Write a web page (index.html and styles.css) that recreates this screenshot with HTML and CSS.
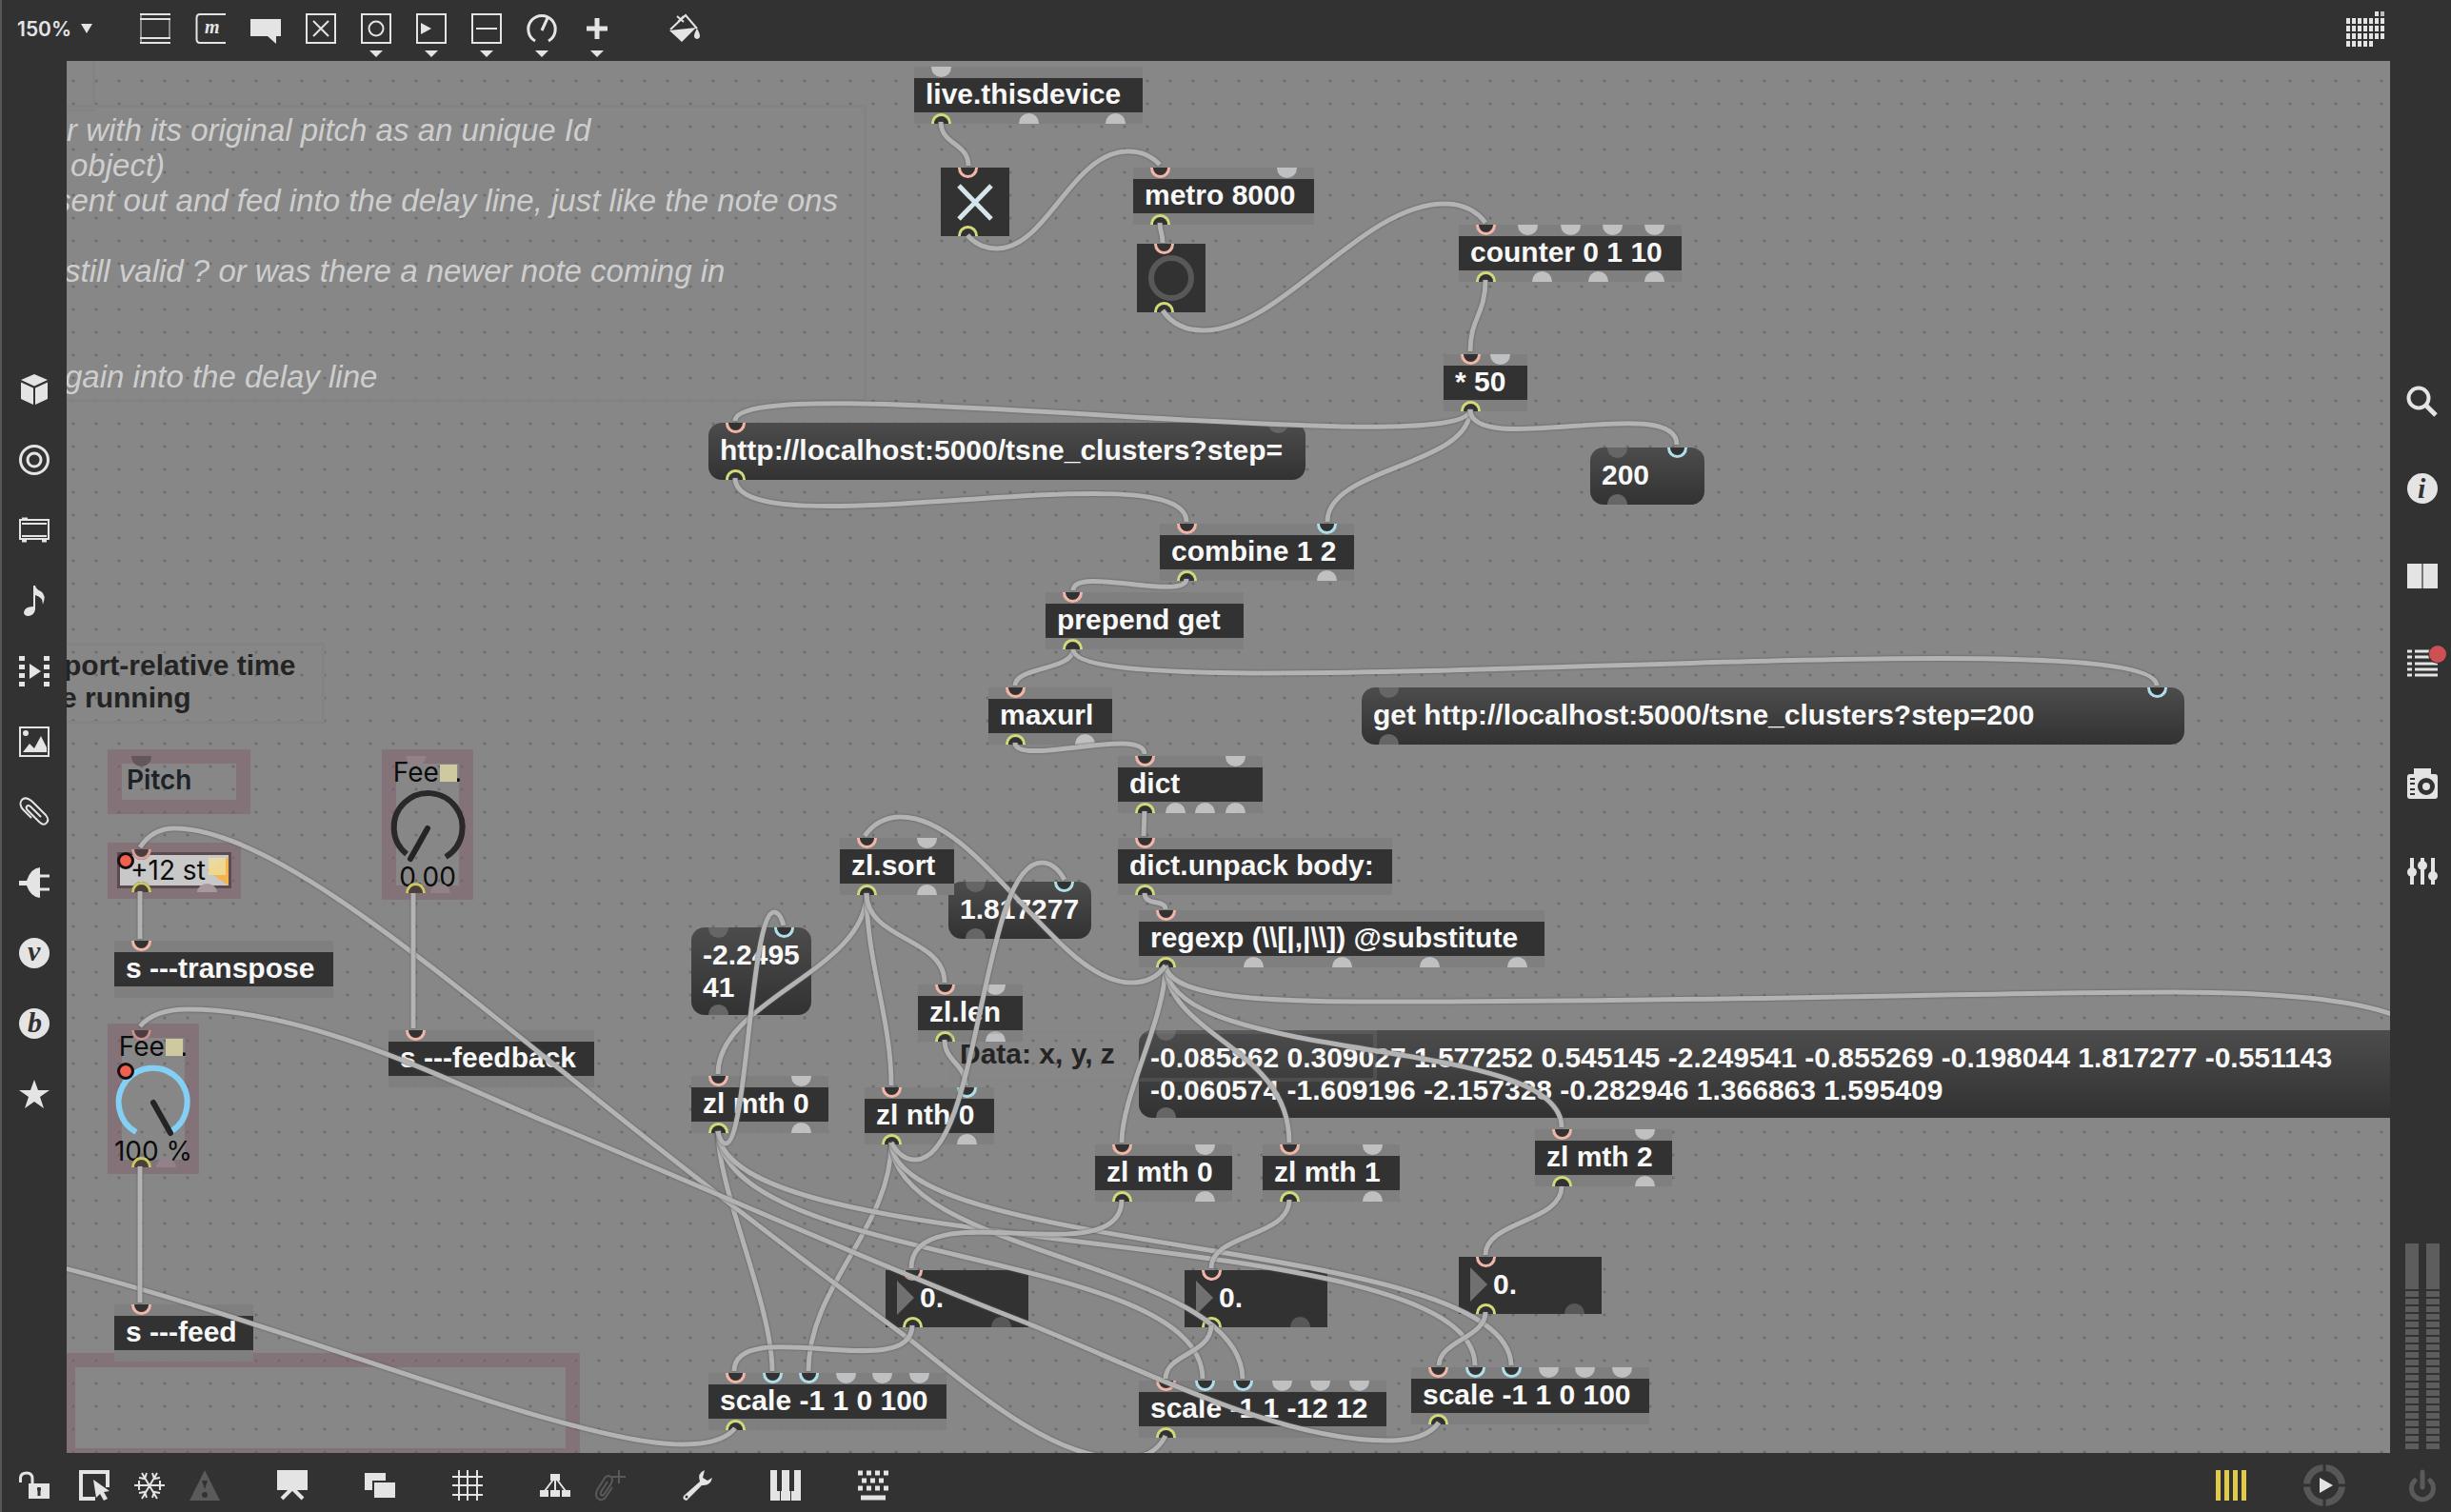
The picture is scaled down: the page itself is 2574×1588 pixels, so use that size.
FILE: index.html
```html
<!DOCTYPE html>
<html lang="en">
<head>
<meta charset="utf-8">
<title>Patcher</title>
<link rel="stylesheet" href="styles.css">
</head>
<body>
<div class="app">
<header class="bar top">
  <label class="zoom"><select aria-label="Zoom"><option>150%</option></select><svg width="12" height="10" viewBox="0 0 12 10"><path d="M0 0h12L6 10z"/></svg></label>
  <nav class="tools">
    <button aria-label="Object"><svg class="ic" viewBox="0 0 32 32"><path d="M0 1h32M0 6h32M0 26h32M0 31h32" class="s2"/><path d="M1 0v32M31 6v20" class="s1"/></svg></button>
    <button aria-label="Message"><svg class="ic" viewBox="0 0 32 32"><path d="M32 1H5Q1.500 1 1.500 5V27Q1.500 31 5 31H32" class="s2"/><text x="10" y="21" class="glyph-s">m</text></svg></button>
    <button aria-label="Comment"><svg class="ic" viewBox="0 0 32 32"><path d="M0 6h32v18h-5v8l-9-8H0z"/></svg></button>
    <button aria-label="Toggle"><svg class="ic" viewBox="0 0 32 32"><path d="M1 1h30v30H1zM8 8l16 16M24 8L8 24" class="s2"/></svg></button>
    <button aria-label="Button"><svg class="ic" viewBox="0 0 32 32"><path d="M1 1h30v30H1z" class="s2"/><circle cx="16" cy="16" r="7.500" class="s2"/></svg><svg class="dd" viewBox="0 0 14 7"><path d="M0 0h14L7 7z"/></svg></button>
    <button aria-label="Number"><svg class="ic" viewBox="0 0 32 32"><path d="M1 1h30v30H1z" class="s2"/><path d="M5 10l11 6-11 6z"/></svg><svg class="dd" viewBox="0 0 14 7"><path d="M0 0h14L7 7z"/></svg></button>
    <button aria-label="Slider"><svg class="ic" viewBox="0 0 32 32"><path d="M1 1h30v30H1zM5 16h22" class="s2"/></svg><svg class="dd" viewBox="0 0 14 7"><path d="M0 0h14L7 7z"/></svg></button>
    <button aria-label="Dial"><svg class="ic" viewBox="0 0 32 32"><path d="M9 29A14.200 14.200 0 1 1 23 29M16 18l6-13" class="s3"/></svg><svg class="dd" viewBox="0 0 14 7"><path d="M0 0h14L7 7z"/></svg></button>
    <button aria-label="Add"><svg class="ic" viewBox="0 0 32 32"><path d="M16 5v22M5 16h22" class="s5"/></svg><svg class="dd" viewBox="0 0 14 7"><path d="M0 0h14L7 7z"/></svg></button>
    <button class="paint" aria-label="Format"><svg class="ic" viewBox="0 0 32 32"><path d="M1 17L17 2l12 14M8 3l7 6M15 3L9 9" class="s2"/><path d="M0 18l28-3-15 15zM29 16q6 10 0 11-6-1 0-11z"/></svg></button>
  </nav>
  <button class="grid-toggle" aria-label="Control surface"><svg width="40" height="40" viewBox="0 0 40 40"><path d="M0 10h4M6 10h4M12 10h4M18 10h4M24 10h4M30 2h4M30 10h4M36 10h4M0 18h4M6 18h4M12 18h4M18 18h4M24 18h4M30 18h4M36 18h4M0 26h4M6 26h4M12 26h4M18 26h4M24 26h4M30 26h4M36 26h4M0 34h4M6 34h4M12 34h4M18 34h4M24 34h4" class="pads"/><path d="M36 2h4" class="pads dim"/></svg></button>
</header>

<div class="middle">
<aside class="bar left">
  <button aria-label="Packages"><svg class="ic" viewBox="0 0 32 32"><path d="M16 0l14 6-14 6.500L2 6zM2 8.500l13 6V32L2 26zM30 8.500l-13 6V32l13-6z"/></svg></button>
  <button aria-label="Target"><svg class="ic" viewBox="0 0 32 32"><circle cx="16" cy="16" r="14.500" class="s3"/><circle cx="16" cy="16" r="7" class="s3"/></svg></button>
  <button aria-label="Devices"><svg class="ic" viewBox="0 0 32 32"><path d="M1 5h30v20H1zM3 9h26M3 22h26" class="s2"/><path d="M3 4h6M3 27h5M24 27h5" class="s3"/></svg></button>
  <button aria-label="Audio"><svg class="ic" viewBox="0 0 32 32"><path d="M15 0h2q1 4 6 6 6 4 2 14 0-8-8-10v15q-1 6-7 7-5 0-5-4 1-6 10-6z"/></svg></button>
  <button aria-label="Video"><svg class="ic" viewBox="0 0 32 32"><path d="M3 0v32M29 0v32" class="film"/><path d="M11 8l12 8-12 8z"/></svg></button>
  <button aria-label="Images"><svg class="ic" viewBox="0 0 32 32"><path d="M1 1h30v30H1z" class="s2"/><path d="M4 27l7-9 5 5 7-13 6 12v5z"/><circle cx="7" cy="7" r="3"/></svg></button>
  <button aria-label="Attach"><svg class="ic" viewBox="0 0 32 32"><path d="M23 21L12 10q-3-2-4 0-1 2 1 4l12 12q5 5 8 1 3-3-1-8L14 5Q7-1 3 3q-4 5 2 11l8 8" class="s2"/></svg></button>
  <button aria-label="Plugins"><svg class="ic" viewBox="0 0 32 32"><path d="M22 0v32q-10-1-14-13H0v-5h8Q12 1 22 0z"/><path d="M22 9h10M22 23h10" class="s3"/></svg></button>
  <button aria-label="Vizzie"><svg class="ic" viewBox="0 0 32 32"><circle cx="16" cy="16" r="16"/><text x="9" y="24" class="glyph-d">v</text></svg></button>
  <button aria-label="BEAP"><svg class="ic" viewBox="0 0 32 32"><circle cx="16" cy="16" r="16"/><text x="9" y="25" class="glyph-d">b</text></svg></button>
  <button aria-label="Favourites"><svg class="ic" viewBox="0 0 32 32"><path d="M16 1l4 11h12l-10 7 4 12-10-7-10 7 4-12L0 12h12z"/></svg></button>
</aside>

<main class="canvas">
<div class="patch">
  <div class="frame" style="left:0;top:0;width:100px;height:117px"></div>
  <div class="frame" style="left:0;top:110px;width:910px;height:312px"></div>
  <p class="note" style="left:70px;top:118px">r with its original pitch as an unique Id</p>
  <p class="note" style="left:74px;top:155px">object)</p>
  <p class="note" style="left:58px;top:192px">sent out and fed into the delay line, just like the note ons</p>
  <p class="note" style="left:68px;top:266px">still valid ? or was there a newer note coming in</p>
  <p class="note" style="left:68px;top:377px">gain into the delay line</p>
  <div class="frame" style="left:0;top:675px;width:341px;height:85px"></div>
  <p class="remark" style="left:67px;top:682px">port-relative time</p>
  <p class="remark" style="left:64px;top:716px">e running</p>
  <div class="pink" style="left:64px;top:1421px;width:545px;height:115px"></div>

  <div class="pink pitch" style="left:113px;top:787px;width:150px;height:68px"><i class="p sh"></i><span>Pitch</span></div>

  <div class="numpink" style="left:113px;top:885px;width:140px;height:59px">
    <input aria-label="Pitch" value="+12 st">
    <svg viewBox="0 0 140 59"><path d="M104 29l23-14v30z" fill="#f3b34e"/><path d="M106 16h18v18h-18z" fill="#eedd9e" opacity=".85"/><path d="M25 7h21a10.500 11 0 0 1-21 0" fill="#4a3c41"/><path d="M26.500 7a9 9.500 0 0 0 18 0" fill="none" stroke="#d9a09a" stroke-width="3"/><path d="M25 52a10.500 11 0 0 1 21 0" fill="#4a4038"/><path d="M26.500 52a9 9.500 0 0 1 18 0" fill="none" stroke="#c9c768" stroke-width="3"/><path d="M94 52a10.500 9 0 0 1 21 0" fill="#a8989e"/><circle cx="19" cy="19" r="7.500" fill="#f0604f" stroke="#15100f" stroke-width="3"/></svg>
  </div>

  <div class="pink dial" style="left:401px;top:787px"><span>Fee...</span><span>0.00</span>
    <svg viewBox="0 0 96 158"><path d="M25.500 7h21a10.500 10 0 0 1-21 0" fill="#93818a"/><path d="M61 16h18v18H61z" fill="#cfc9a0"/><path d="M26 110A36 36 0 1 1 67 113" class="ring"/><path d="M48 83l-18 32" class="needle"/><path d="M25 151a10.500 11 0 0 1 21 0" fill="#4a4038"/><path d="M26.500 151a9 9.500 0 0 1 18 0" fill="none" stroke="#c9c768" stroke-width="3"/><path d="M51 151a10.500 10 0 0 1 21 0" fill="#93818a"/></svg></div>
  <div class="pink dial" style="left:113px;top:1075px"><span>Fee...</span><span>100 %</span>
    <svg viewBox="0 0 96 158"><path d="M25 7h21a10.500 11 0 0 1-21 0" fill="#4a3c41"/><path d="M26.500 7a9 9.500 0 0 0 18 0" fill="none" stroke="#c98f90" stroke-width="3"/><path d="M61 16h18v18H61z" fill="#cfc9a0"/><path d="M30 114A36 36 0 1 1 67 113" class="ring blue"/><path d="M48 83l18 32" class="needle"/><circle cx="19" cy="50" r="7.500" fill="#f0604f" stroke="#15100f" stroke-width="3"/><path d="M25 151a10.500 11 0 0 1 21 0" fill="#4a4038"/><path d="M26.500 151a9 9.500 0 0 1 18 0" fill="none" stroke="#c9c768" stroke-width="3"/><path d="M51 151a10.500 10 0 0 1 21 0" fill="#93818a"/></svg></div>

  <div class="obj" style="left:120px;top:988px;width:230px"><div class="in"><i class="p r"></i></div><b>s ---transpose</b><div class="out"></div></div>
  <div class="obj" style="left:408px;top:1082px;width:216px"><div class="in"><i class="p r"></i></div><b>s ---feedback</b><div class="out"></div></div>
  <div class="obj" style="left:120px;top:1370px;width:146px"><div class="in"><i class="p r"></i></div><b>s ---feed</b><div class="out"></div></div>

  <div class="obj" style="left:960px;top:70px;width:240px"><div class="in"><i class="p g"></i></div><b>live.thisdevice</b><div class="out"><i class="p y"></i><i class="p g"></i><i class="p g"></i></div></div>
  <label class="obj box" style="left:988px;top:176px"><span class="in"><i class="p r"></i></span><input type="checkbox" checked aria-label="Toggle"><svg viewBox="0 0 72 72"><path d="M19 19l34 35M53 19L19 54" stroke="#d5e6ea" stroke-width="5"/></svg><span class="out"><i class="p y"></i></span></label>
  <div class="obj" style="left:1190px;top:176px;width:190px"><div class="in"><i class="p r"></i><i class="p g"></i></div><b>metro 8000</b><div class="out"><i class="p y"></i></div></div>
  <button class="obj box" aria-label="Bang" style="left:1194px;top:256px"><span class="in"><i class="p r"></i></span><svg viewBox="0 0 72 72"><circle cx="36" cy="36" r="21" fill="none" stroke="#585858" stroke-width="6"/></svg><span class="out"><i class="p y"></i></span></button>
  <div class="obj" style="left:1532px;top:236px;width:234px"><div class="in"><i class="p r"></i><i class="p g"></i><i class="p g"></i><i class="p g"></i><i class="p g"></i></div><b>counter 0 1 10</b><div class="out"><i class="p y"></i><i class="p g"></i><i class="p g"></i><i class="p g"></i></div></div>
  <div class="obj" style="left:1516px;top:372px;width:88px"><div class="in"><i class="p r"></i><i class="p g"></i></div><b>* 50</b><div class="out"><i class="p y"></i></div></div>
  <button class="obj msg" style="left:1670px;top:470px;width:120px"><span class="in"><i class="p d"></i><i class="p b"></i></span><b>200</b><span class="out"><i class="p d"></i></span></button>
  <button class="obj msg" style="left:744px;top:444px;width:627px"><span class="in"><i class="p r"></i><i class="p d"></i></span><b>http://localhost:5000/tsne_clusters?step=</b><span class="out"><i class="p y"></i></span></button>
  <div class="obj" style="left:1218px;top:550px;width:204px"><div class="in"><i class="p r"></i><i class="p b"></i></div><b>combine 1 2</b><div class="out"><i class="p y"></i><i class="p g"></i></div></div>
  <div class="obj" style="left:1098px;top:622px;width:208px"><div class="in"><i class="p r"></i></div><b>prepend get</b><div class="out"><i class="p y"></i></div></div>
  <div class="obj" style="left:1038px;top:722px;width:130px"><div class="in"><i class="p r"></i></div><b>maxurl</b><div class="out"><i class="p y"></i><i class="p g"></i></div></div>
  <button class="obj msg" style="left:1430px;top:722px;width:864px"><span class="in"><i class="p d"></i><i class="p b"></i></span><b>get http://localhost:5000/tsne_clusters?step=200</b><span class="out"><i class="p d"></i></span></button>
  <div class="obj" style="left:1174px;top:794px;width:152px"><div class="in"><i class="p r"></i><i class="p g"></i></div><b>dict</b><div class="out"><i class="p y"></i><i class="p g"></i><i class="p g"></i><i class="p g"></i></div></div>
  <div class="obj" style="left:1174px;top:880px;width:288px"><div class="in"><i class="p r"></i></div><b>dict.unpack body:</b><div class="out"><i class="p y"></i></div></div>
  <div class="obj" style="left:1196px;top:956px;width:426px"><div class="in"><i class="p r"></i></div><b>regexp (\\[|,|\\]) @substitute</b><div class="out"><i class="p y"></i><i class="p g"></i><i class="p g"></i><i class="p g"></i><i class="p g"></i></div></div>

  <button class="obj msg" style="left:996px;top:926px;width:150px"><span class="in"><i class="p d"></i><i class="p b"></i></span><b>1.817277</b><span class="out"><i class="p d"></i></span></button>
  <div class="obj" style="left:882px;top:880px;width:120px"><div class="in"><i class="p r"></i><i class="p g"></i></div><b>zl.sort</b><div class="out"><i class="p y"></i><i class="p g"></i></div></div>
  <button class="obj msg" style="left:726px;top:974px;width:126px"><span class="in"><i class="p d"></i><i class="p b"></i></span><b>-2.2495<br>41</b><span class="out"><i class="p d"></i></span></button>
  <p class="remark" style="left:1008px;top:1090px">Data: x, y, z</p>
  <div class="obj" style="left:964px;top:1034px;width:110px"><div class="in"><i class="p r"></i><i class="p g"></i></div><b>zl.len</b><div class="out"><i class="p y"></i><i class="p g"></i></div></div>
  <div class="obj" style="left:726px;top:1130px;width:144px"><div class="in"><i class="p r"></i><i class="p g"></i></div><b>zl mth 0</b><div class="out"><i class="p y"></i><i class="p g"></i></div></div>
  <div class="obj" style="left:908px;top:1142px;width:136px"><div class="in"><i class="p r"></i><i class="p b"></i></div><b>zl nth 0</b><div class="out"><i class="p y"></i><i class="p g"></i></div></div>
  <button class="obj msg" style="left:1196px;top:1082px;width:1400px"><span class="in"><i class="p d"></i><i class="p d"></i></span><b>-0.085862 0.309027 1.577252 0.545145 -2.249541 -0.855269 -0.198044 1.817277 -0.551143<br>-0.060574 -1.609196 -2.157328 -0.282946 1.366863 1.595409</b><span class="out"><i class="p d"></i></span></button>
  <div class="frame over" style="left:997px;top:1082px;width:449px;height:54px"></div>
  <div class="obj" style="left:1150px;top:1202px;width:144px"><div class="in"><i class="p r"></i><i class="p g"></i></div><b>zl mth 0</b><div class="out"><i class="p y"></i><i class="p g"></i></div></div>
  <div class="obj" style="left:1326px;top:1202px;width:144px"><div class="in"><i class="p r"></i><i class="p g"></i></div><b>zl mth 1</b><div class="out"><i class="p y"></i><i class="p g"></i></div></div>
  <div class="obj" style="left:1612px;top:1186px;width:144px"><div class="in"><i class="p r"></i><i class="p g"></i></div><b>zl mth 2</b><div class="out"><i class="p y"></i><i class="p g"></i></div></div>

  <div class="obj num" style="left:930px;top:1334px"><div class="in"><i class="p r"></i></div><div class="val"><svg viewBox="0 0 18 36"><path d="M0 0l18 18L0 36z"/></svg><input value="0." aria-label="X"></div><div class="out"><i class="p y"></i><i class="p d"></i></div></div>
  <div class="obj num" style="left:1244px;top:1334px"><div class="in"><i class="p r"></i></div><div class="val"><svg viewBox="0 0 18 36"><path d="M0 0l18 18L0 36z"/></svg><input value="0." aria-label="Y"></div><div class="out"><i class="p y"></i><i class="p d"></i></div></div>
  <div class="obj num" style="left:1532px;top:1320px"><div class="in"><i class="p r"></i></div><div class="val"><svg viewBox="0 0 18 36"><path d="M0 0l18 18L0 36z"/></svg><input value="0." aria-label="Z"></div><div class="out"><i class="p y"></i><i class="p d"></i></div></div>
  <div class="obj" style="left:744px;top:1442px;width:250px"><div class="in"><i class="p r"></i><i class="p b"></i><i class="p b"></i><i class="p g"></i><i class="p g"></i><i class="p g"></i></div><b>scale -1 1 0 100</b><div class="out"><i class="p y"></i></div></div>
  <div class="obj" style="left:1196px;top:1450px;width:260px"><div class="in"><i class="p r"></i><i class="p b"></i><i class="p b"></i><i class="p g"></i><i class="p g"></i><i class="p g"></i></div><b>scale -1 1 -12 12</b><div class="out"><i class="p y"></i></div></div>
  <div class="obj" style="left:1482px;top:1436px;width:250px"><div class="in"><i class="p r"></i><i class="p b"></i><i class="p b"></i><i class="p g"></i><i class="p g"></i><i class="p g"></i></div><b>scale -1 1 0 100</b><div class="out"><i class="p y"></i></div></div>

  <svg class="cables" width="2600" height="1600" viewBox="0 0 2600 1600">
    <path d="M754 1188C754 1250 811 1370 811 1440"/>
    <path d="M936 1200C936 1290 849 1350 849 1440"/>
    <path d="M754 1188C760 1330 1262 1310 1263 1448"/>
    <path d="M754 1188C760 1330 1548 1280 1549 1434"/>
    <path d="M936 1200C940 1320 1303 1325 1305 1448"/>
    <path d="M936 1200C940 1320 1585 1300 1587 1434"/>
    <path d="M147 890Q160 870 183 870C290 870 470 1030 659 1180C800 1292 890 1358 957 1408C1040 1475 1110 1532 1180 1532Q1212 1532 1224 1508"/>
    <path d="M147 1078Q162 1060 197 1060C330 1060 480 1140 578 1180C740 1247 900 1320 1072 1387C1200 1438 1340 1513 1457 1513Q1498 1513 1511 1494"/>
    <path d="M772 1500Q758 1517 716 1517C600 1517 300 1390 60 1330"/>
    <path d="M147 936V986"/><path d="M147 1225V1368"/><path d="M434 938V1080"/>
    <path d="M988 128C988 152 1017 150 1017 174"/>
    <path d="M1016 247Q1028 261 1047 261C1100 261 1125 159 1185 159Q1205 159 1218 173"/>
    <path d="M1218 234C1218 244 1221 244 1221 255"/>
    <path d="M1221 326Q1235 347 1264 347C1345 347 1430 214 1517 214Q1545 214 1560 234"/>
    <path d="M1560 294C1560 330 1544 334 1544 369"/>
    <path d="M1544 430C1544 490 1394 490 1394 548"/>
    <path d="M1544 430C1544 488 772 384 772 442"/>
    <path d="M1544 430C1544 482 1761 412 1761 467"/>
    <path d="M772 502C772 580 1246 470 1246 548"/>
    <path d="M1246 608C1246 632 1127 594 1127 620"/>
    <path d="M1127 682C1127 704 1066 700 1066 720"/>
    <path d="M1127 682C1127 752 2265 644 2265 720"/>
    <path d="M1066 780C1066 806 1202 762 1202 792"/>
    <path d="M1202 852L1201 878"/>
    <path d="M1202 938C1202 952 1224 944 1224 955"/>
    <path d="M1224 1014C1224 1070 1178 1150 1178 1200"/>
    <path d="M1224 1014C1228 1090 1354 1100 1354 1200"/>
    <path d="M1224 1014C1228 1120 1640 1085 1640 1184"/>
    <path d="M1224 1014C1230 1052 1350 1052 1480 1052C1800 1052 2100 1042 2280 1042Q2450 1042 2514 1066"/>
    <path d="M1224 1014Q1212 1032 1188 1032C1110 1032 1030 858 946 858Q922 858 908 878"/>
    <path d="M910 938C910 1020 754 1050 754 1128"/>
    <path d="M910 938C910 1010 936 1070 936 1140"/>
    <path d="M910 938C910 988 992 984 992 1032"/>
    <path d="M992 1092C992 1115 1014 1117 1014 1140"/>
    <path d="M754 1188Q757 1201 762 1201C785 1201 788 958 813 958Q819 958 823 972"/>
    <path d="M936 1200Q946 1218 961 1218C1030 1218 1030 906 1094 906Q1108 906 1118 924"/>
    <path d="M1178 1260C1178 1340 957 1250 957 1332"/>
    <path d="M1354 1260C1354 1300 1272 1295 1272 1332"/>
    <path d="M1640 1246C1640 1284 1560 1282 1560 1318"/>
    <path d="M958 1392C958 1454 771 1380 771 1440"/>
    <path d="M1272 1392C1272 1422 1224 1422 1224 1448"/>
    <path d="M1560 1378C1560 1405 1512 1408 1511 1434"/>
  </svg>
</div>
</main>

<aside class="bar right">
  <button aria-label="Search"><svg class="ic" viewBox="0 0 32 32"><circle cx="12" cy="13" r="10.500" class="s4"/><path d="M20 21l10 10" class="s5"/></svg></button>
  <button aria-label="Inspector"><svg class="ic" viewBox="0 0 32 32"><circle cx="16" cy="16" r="16"/><text x="11" y="26" class="glyph-d">i</text></svg></button>
  <button aria-label="Reference"><svg class="ic" viewBox="0 0 32 32"><path d="M0 3h15v26H0zM17 3h15v26H17z"/><path d="M16 3v26" stroke="#777" stroke-width="2"/></svg></button>
  <button aria-label="Console"><svg class="ic" viewBox="0 0 32 32"><path d="M0 3h5M8 3h24M0 9h5M8 9h24M0 16h5M8 16h24M0 22h5M8 22h24M0 28h5M8 28h24" class="s3"/><circle cx="32" cy="6" r="10" fill="#323232"/><circle cx="32" cy="6" r="9" fill="#cd5055"/></svg></button>
  <button class="gap" aria-label="Snapshots"><svg class="ic" viewBox="0 0 32 32"><path d="M3 6h4V0h18v6h4q3 0 3 3v20q0 3-3 3H3q-3 0-3-3V9q0-3 3-3z"/><circle cx="20" cy="19" r="6.500" fill="none" stroke="#323232" stroke-width="5"/><path d="M3 11h5M3 16h5M3 22h5M3 27h5" stroke="#323232" stroke-width="2"/></svg></button>
  <button aria-label="Mixer"><svg class="ic" viewBox="0 0 32 32"><path d="M5 2v28M16 2v28M27 2v28" class="s4"/><circle cx="5" cy="17" r="5"/><circle cx="16" cy="10" r="5"/><circle cx="27" cy="21" r="5"/></svg></button>
  <div class="meters"><i></i><i></i></div>
</aside>
</div>

<footer class="bar bottom">
  <button class="lock" aria-label="Lock"><svg class="ic" viewBox="0 0 32 32"><path d="M10 14h22v16H10z"/><path d="M1.500 13V8Q2 3 8 3q6 0 6 6v6" class="s3"/><path d="M21 18v9M19 20h4" stroke="#323232" stroke-width="3"/></svg></button>
  <button aria-label="Select"><svg class="ic" viewBox="0 0 32 32"><path d="M17 30H2V2h28v16" class="s4"/><path d="M15 10l3 19 4-4 4 7 4-2-4-7 6-1z"/></svg></button>
  <button aria-label="Freeze"><svg class="ic" viewBox="0 0 32 32"><path d="M0 16h32M8 3l16 27M24 3L8 30M5 11v10M27 11v10M5 8l6 1 2-6M27 8l-6 1-2-6M5 24l6-1 2 6M27 24l-6-1-2 6" class="s2"/></svg></button>
  <button class="off" aria-label="Warnings"><svg class="ic" viewBox="0 0 32 32"><path d="M16 0l16 32H0z"/><path d="M13 11h6l-3 9z" fill="#323232"/><circle cx="16" cy="26" r="3" fill="#323232"/></svg></button>
  <button class="sep" aria-label="Presentation"><svg class="ic" viewBox="0 0 32 32"><path d="M0 0h32v21H0z"/><path d="M15 20L5 30M17 20l10 10" class="s4"/></svg></button>
  <button class="sep" aria-label="Layers"><svg class="ic" viewBox="0 0 32 32"><path d="M0 3h22v8H8v10H0zM10 13h22v16H10z"/></svg></button>
  <button class="sep" aria-label="Grid"><svg class="ic" viewBox="0 0 32 32"><path d="M7 0v32M16 0v32M26 0v32M0 7h32M0 16h32M0 26h32" class="s2"/></svg></button>
  <button class="sep" aria-label="Hierarchy"><svg class="ic" viewBox="0 0 32 32"><path d="M11 4h10v7H11zM0 21h9v7H0zM11 21h10v7H11zM23 21h9v7h-9z"/><path d="M14 10L5 22M16 10v12M18 10l9 12" class="s2"/></svg></button>
  <button class="off" aria-label="Add attachment"><svg class="ic" viewBox="0 0 32 32"><path d="M13 12L6 23q-1 5 3 3l8-12q3-7-3-8-3 0-5 4L2 21q-3 8 3 10 4 1 7-4l6-9M25 0v14M18 7h14" class="s2"/></svg></button>
  <button class="sep" aria-label="Tools"><svg class="ic" viewBox="0 0 32 32"><path d="M23 0q-8 3-5 12L1 27q-2 4 3 5L20 16q9 1 11-8l-5 3-5-3z"/><circle cx="4" cy="28" r="1.500" fill="#323232"/></svg></button>
  <button class="sep" aria-label="Keyboard"><svg class="ic" viewBox="0 0 32 32"><path d="M0 0h7v22h3v10H0zM12 0h8v22h1v10H11V22h1zM25 0h7v32H22V22h3z"/></svg></button>
  <button class="sep" aria-label="Key map"><svg class="ic" viewBox="0 0 32 32"><path d="M0 3h5M9 3h5M18 3h5M27 3h5M4 11h5M13 11h5M22 11h5M0 19h5M9 19h5M18 19h5M27 19h5M3 29h26" class="s5"/></svg></button>
  <button class="yellow" aria-label="CPU"><svg class="ic" viewBox="0 0 32 32"><path d="M0 0h5v32H0zM9 0h5v32H9zM18 0h5v32h-5zM27 0h5v32h-5z"/></svg></button>
  <button class="play" aria-label="Play"><svg width="44" height="44" viewBox="0 0 44 44"><circle cx="22" cy="22" r="18.500" fill="none" stroke="#575757" stroke-width="7"/><path d="M22 0v8M22 36v8M0 22h8M36 22h8" stroke="#323232" stroke-width="3"/><path d="M17 14l14 8-14 8z"/></svg></button>
  <button class="off power" aria-label="Audio on"><svg class="ic" viewBox="0 0 32 32"><path d="M8 11A11.500 11.500 0 1 0 24 11M16 2v16" class="s5r"/></svg></button>
</footer>
</div>
</body>
</html>
```
FILE: styles.css
```css
* { box-sizing: border-box; }
body { margin: 0; font-family: "Liberation Sans", Arial, sans-serif; background: #323232; }
button { appearance: none; border: 0; margin: 0; padding: 0; background: none; color: inherit; font: inherit; }
svg { display: block; }
p { margin: 0; }

.app { display: flex; flex-direction: column; height: 100vh; border-left: 2px solid #585858; overflow: hidden; }
.bar { flex: none; background: #323232; fill: #e4e4e4; color: #e4e4e4; }
.ic { flex: none; width: 32px; height: 32px; overflow: visible; }
.s1, .s2, .s3, .s4, .s5, .s5r, .pads, .film { fill: none; stroke: #e4e4e4; }
.s1 { stroke-width: 1; }
.s2 { stroke-width: 2; }
.s3 { stroke-width: 3; }
.s4 { stroke-width: 4; }
.s5 { stroke-width: 5; }
.s5r { stroke-width: 5; stroke-linecap: round; }
.pads { stroke-width: 6; }
.pads.dim { stroke: #bdbdbd; }
.film { stroke-width: 6; stroke-dasharray: 5 4; }
.glyph-s { font: italic bold 20px "Liberation Serif", serif; }
.glyph-d { font: italic bold 30px "Liberation Serif", serif; fill: #323232; }

.top { display: flex; align-items: flex-start; height: 64px; padding: 0 70px 0 16px; }
.zoom { display: flex; align-items: center; gap: 9px; height: 60px; width: 129px; }
.zoom select { appearance: none; width: 58px; padding: 0; border: 0; background: none; color: #e4e4e4; font: 600 21px Inter, sans-serif; }
.tools { display: flex; gap: 26px; padding-top: 14px; }
.tools button { display: flex; flex-direction: column; align-items: center; justify-content: flex-start; gap: 7px; height: 46px; }
.dd { width: 14px; height: 7px; }
.tools .paint { margin-left: 34px; }
.grid-toggle { margin: 12px 0 0 auto; }

.middle { display: flex; flex: 1; min-height: 0; }
.left { width: 68px; display: flex; flex-direction: column; align-items: center; gap: 42px; padding-top: 329px; }
.right { width: 64px; display: flex; flex-direction: column; align-items: center; gap: 60px; padding: 341px 0 4px 4px; }
.right .gap { margin-top: 34px; }
.meters { display: flex; gap: 8px; margin-top: auto; }
.meters i { width: 14px; height: 216px; background: linear-gradient(#5d5d5d, #5d5d5d) top / 100% 48px no-repeat, repeating-linear-gradient(#323232 0 2px, #5d5d5d 2px 8px); }

.bottom { display: flex; align-items: center; gap: 26px; height: 62px; padding: 6px 14px 0 18px; }
.lock { margin-right: 5px; }
.sep { margin-left: 34px; }
.off { fill: #5a5a5a; }
.off .s2, .off .s5r { stroke: #5a5a5a; }
.yellow { margin-left: auto; fill: #e0ca4c; }
.play { margin-left: 34px; }
.power { margin-left: 39px; }

.canvas { position: relative; flex: 1; min-width: 0; overflow: hidden; background: radial-gradient(circle at 7px 7px, #6d6d6d 1px, transparent 2px) 0 14px / 24px 24px #878787; }
.patch { position: absolute; left: -70px; top: -64px; width: 2600px; height: 1600px; }
.patch > * { position: absolute; }
.cables { left: 0; top: 0; pointer-events: none; }
.cables path { fill: none; stroke: #b3b3b3; stroke-width: 5; filter: drop-shadow(0 0 1px #555); }
.frame { border: 3px solid #838383; }
.over { border: 4px solid rgba(130, 130, 130, .25); }
.note { font: italic 33px/37px "Liberation Sans", Arial, sans-serif; color: #cecece; white-space: nowrap; }
.remark { font: bold 30px/34px "Liberation Sans", Arial, sans-serif; color: #242424; white-space: nowrap; }

.obj { display: flex; flex-direction: column; color: #f8f8f8; font: bold 30px/34px "Liberation Sans", Arial, sans-serif; text-align: left; white-space: nowrap; }
.obj b { display: block; height: 36px; padding: 0 12px; background: #323232; }
.in, .out { display: flex; justify-content: space-between; height: 12px; padding: 0 18px; background: #7f7f7f; }
.out { align-items: flex-end; }
.p { width: 21px; height: 11px; border-radius: 0 0 11px 11px; }
.out .p { border-radius: 11px 11px 0 0; }
.g { background: #bfc0c2; }
.d { background: #666; }
.r { background: #323232; border: 3px solid #f2b6a8; border-top: 0; }
.b { background: #323232; border: 3px solid #aedfea; border-top: 0; }
.y { background: #323232; border: 3px solid #d3da7a; border-bottom: 0; }

.msg { min-height: 60px; border-radius: 14px; background: linear-gradient(#4c4c4c, #323232); overflow: hidden; }
.msg b { height: auto; background: none; padding: 1px 12px; }
.msg .in, .msg .out, .box .in, .box .out, .num .in, .num .out { background: none; height: 11px; }
.msg .out, .box .out, .num .out { margin-top: auto; }
.box { width: 72px; height: 72px; background: #323232; }
.box > svg { position: absolute; inset: 0; }
.box input { appearance: none; position: absolute; inset: 0; margin: 0; }
.num { width: 150px; height: 60px; background: #323232; }
.num .val { display: flex; align-items: center; gap: 6px; height: 36px; padding-left: 12px; }
.num .val svg { width: 18px; height: 36px; fill: #707070; flex: none; }
.num input { width: 80px; height: 34px; padding: 0; border: 0; background: none; color: #f8f8f8; font: inherit; }
.num .d { background: #585858; }

.pink { border: 15px solid rgba(130, 94, 108, .5); font: 28px/34px Inter, sans-serif; color: #0c0c0c; white-space: nowrap; }
.pitch { padding-left: 5px; font-weight: 600; color: #1c2227; }
.pitch .p { position: absolute; left: 10px; top: -8px; }
.sh { background: #65565c; }
.pitch span { display: block; }
.dial { width: 96px; height: 158px; display: flex; flex-direction: column; justify-content: space-between; align-items: center; }
.dial span { margin: -8px 0; }
.dial svg { position: absolute; left: -15px; top: -15px; width: 96px; height: 158px; }
.ring { fill: none; stroke: #2b282a; stroke-width: 6; }
.blue { stroke: #84cff5; }
.needle { fill: none; stroke: #242424; stroke-width: 6; stroke-linecap: round; }
.numpink { background: rgba(130, 94, 108, .5); padding: 10px; }
.numpink input { display: block; width: 120px; height: 38px; padding: 0 0 0 11px; border: 3px solid #5b4b51; background: #c8c8c8; color: #0c0c0c; font: 28px Inter, sans-serif; }
.numpink svg { position: absolute; left: 0; top: 0; width: 140px; height: 59px; }
```
